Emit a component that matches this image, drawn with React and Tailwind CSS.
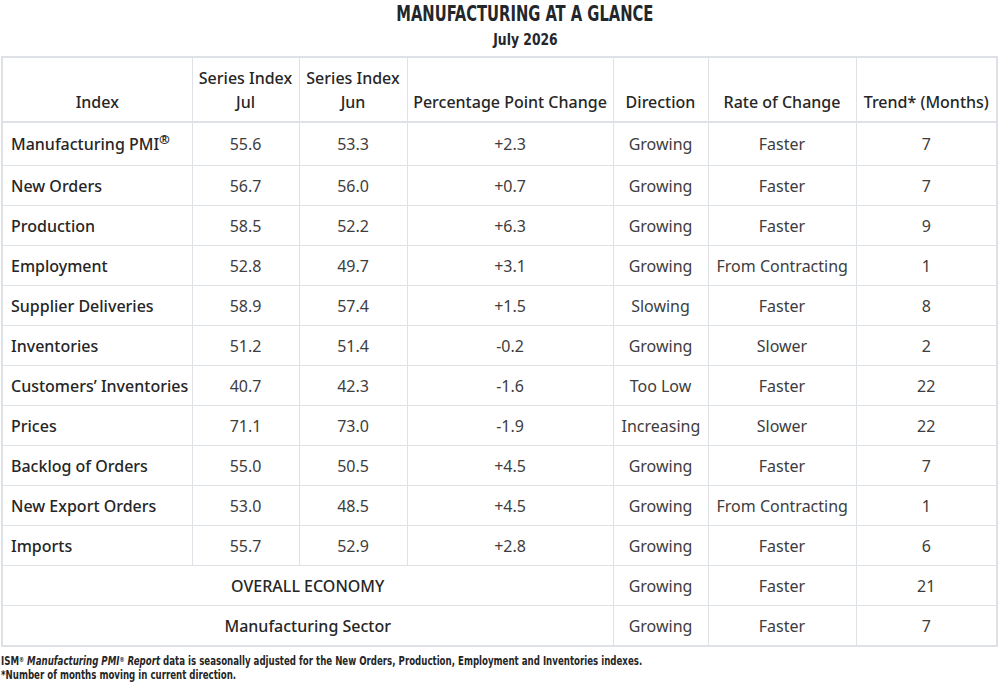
import React from "react";

const rows = [
    { name: "Manufacturing PMI", reg: true, jul: "55.6", jun: "53.3", change: "+2.3", dir: "Growing", rate: "Faster", trend: "7" },
    { name: "New Orders", jul: "56.7", jun: "56.0", change: "+0.7", dir: "Growing", rate: "Faster", trend: "7" },
    { name: "Production", jul: "58.5", jun: "52.2", change: "+6.3", dir: "Growing", rate: "Faster", trend: "9" },
    { name: "Employment", jul: "52.8", jun: "49.7", change: "+3.1", dir: "Growing", rate: "From Contracting", trend: "1" },
    { name: "Supplier Deliveries", jul: "58.9", jun: "57.4", change: "+1.5", dir: "Slowing", rate: "Faster", trend: "8" },
    { name: "Inventories", jul: "51.2", jun: "51.4", change: "-0.2", dir: "Growing", rate: "Slower", trend: "2" },
    { name: "Customers\u2019 Inventories", jul: "40.7", jun: "42.3", change: "-1.6", dir: "Too Low", rate: "Faster", trend: "22" },
    { name: "Prices", jul: "71.1", jun: "73.0", change: "-1.9", dir: "Increasing", rate: "Slower", trend: "22" },
    { name: "Backlog of Orders", jul: "55.0", jun: "50.5", change: "+4.5", dir: "Growing", rate: "Faster", trend: "7" },
    { name: "New Export Orders", jul: "53.0", jun: "48.5", change: "+4.5", dir: "Growing", rate: "From Contracting", trend: "1" },
    { name: "Imports", jul: "55.7", jun: "52.9", change: "+2.8", dir: "Growing", rate: "Faster", trend: "6" },
];

const summary = [
    { name: "OVERALL ECONOMY", dir: "Growing", rate: "Faster", trend: "21" },
    { name: "Manufacturing Sector", dir: "Growing", rate: "Faster", trend: "7" },
];

const cond = { fontFamily: '"Liberation Sans Narrow", "DejaVu Sans Condensed", "Roboto", sans-serif' };

const td = "border border-[#dee2e6] px-2 py-[7.5px] text-center text-[#3d3d3d] leading-6 whitespace-nowrap";
const th = "border border-[#dee2e6] border-b-2 px-1 py-[7.5px] text-center align-bottom font-medium text-[#262626] leading-6 whitespace-nowrap";

export default function App() {
    return (
        <div className="bg-white w-[998px] h-[685px] overflow-hidden" style={{ fontFamily: '"Noto Sans", sans-serif' }}>
            <div className="text-center text-[#23272b] pl-[52px]" style={cond}>
                <h1 className="text-[21px] font-bold leading-[26px] pt-[1px]">
                    <span className="inline-block scale-x-[0.78]">MANUFACTURING AT A GLANCE</span>
                </h1>
                <h2 className="text-[16px] font-bold leading-[20px] mt-[3px]">
                    <span className="inline-block scale-x-[0.86]">July 2026</span>
                </h2>
            </div>

            <table className="mt-[6px] ml-[1px] w-[997px] table-fixed border-collapse border-2 border-[#dee2e6] text-[16px]">
                <colgroup>
                    <col className="w-[190px]" />
                    <col className="w-[107px]" />
                    <col className="w-[108px]" />
                    <col className="w-[206px]" />
                    <col className="w-[95px]" />
                    <col className="w-[148px]" />
                    <col />
                </colgroup>
                <thead>
                    <tr>
                        <th className={th}>Index</th>
                        <th className={th}>Series Index<br />Jul</th>
                        <th className={th}>Series Index<br />Jun</th>
                        <th className={th}>Percentage Point Change</th>
                        <th className={th}>Direction</th>
                        <th className={th}>Rate of Change</th>
                        <th className={th}>Trend* (Months)</th>
                    </tr>
                </thead>
                <tbody>
                    {rows.map((r) => (
                        <tr key={r.name}>
                            <td className={td + " !text-left font-medium !text-[#262626] " + (r.reg ? "!pt-[9px] !pb-[9px]" : "")}>
                                {r.name}
                                {r.reg && <sup className="text-[13px] font-bold">®</sup>}
                            </td>
                            <td className={td}>{r.jul}</td>
                            <td className={td}>{r.jun}</td>
                            <td className={td}>{r.change}</td>
                            <td className={td}>{r.dir}</td>
                            <td className={td}>{r.rate}</td>
                            <td className={td}>{r.trend}</td>
                        </tr>
                    ))}
                    {summary.map((s) => (
                        <tr key={s.name}>
                            <td colSpan={4} className={td + " font-medium !text-[#262626]"}>{s.name}</td>
                            <td className={td}>{s.dir}</td>
                            <td className={td}>{s.rate}</td>
                            <td className={td}>{s.trend}</td>
                        </tr>
                    ))}
                </tbody>
            </table>

            <div className="mt-[7px] text-[12px] leading-[14px] font-bold text-[#262626] px-[1px] whitespace-nowrap" style={cond}>
                <p className="origin-left scale-x-[0.8]">
                    ISM<sup className="text-[7px]">®</sup> <i>Manufacturing PMI<sup className="text-[7px]">®</sup> Report</i> data is seasonally adjusted for the New Orders, Production, Employment and Inventories indexes.
                </p>
                <p className="origin-left scale-x-[0.8]">*Number of months moving in current direction.</p>
            </div>
        </div>
    );
}
